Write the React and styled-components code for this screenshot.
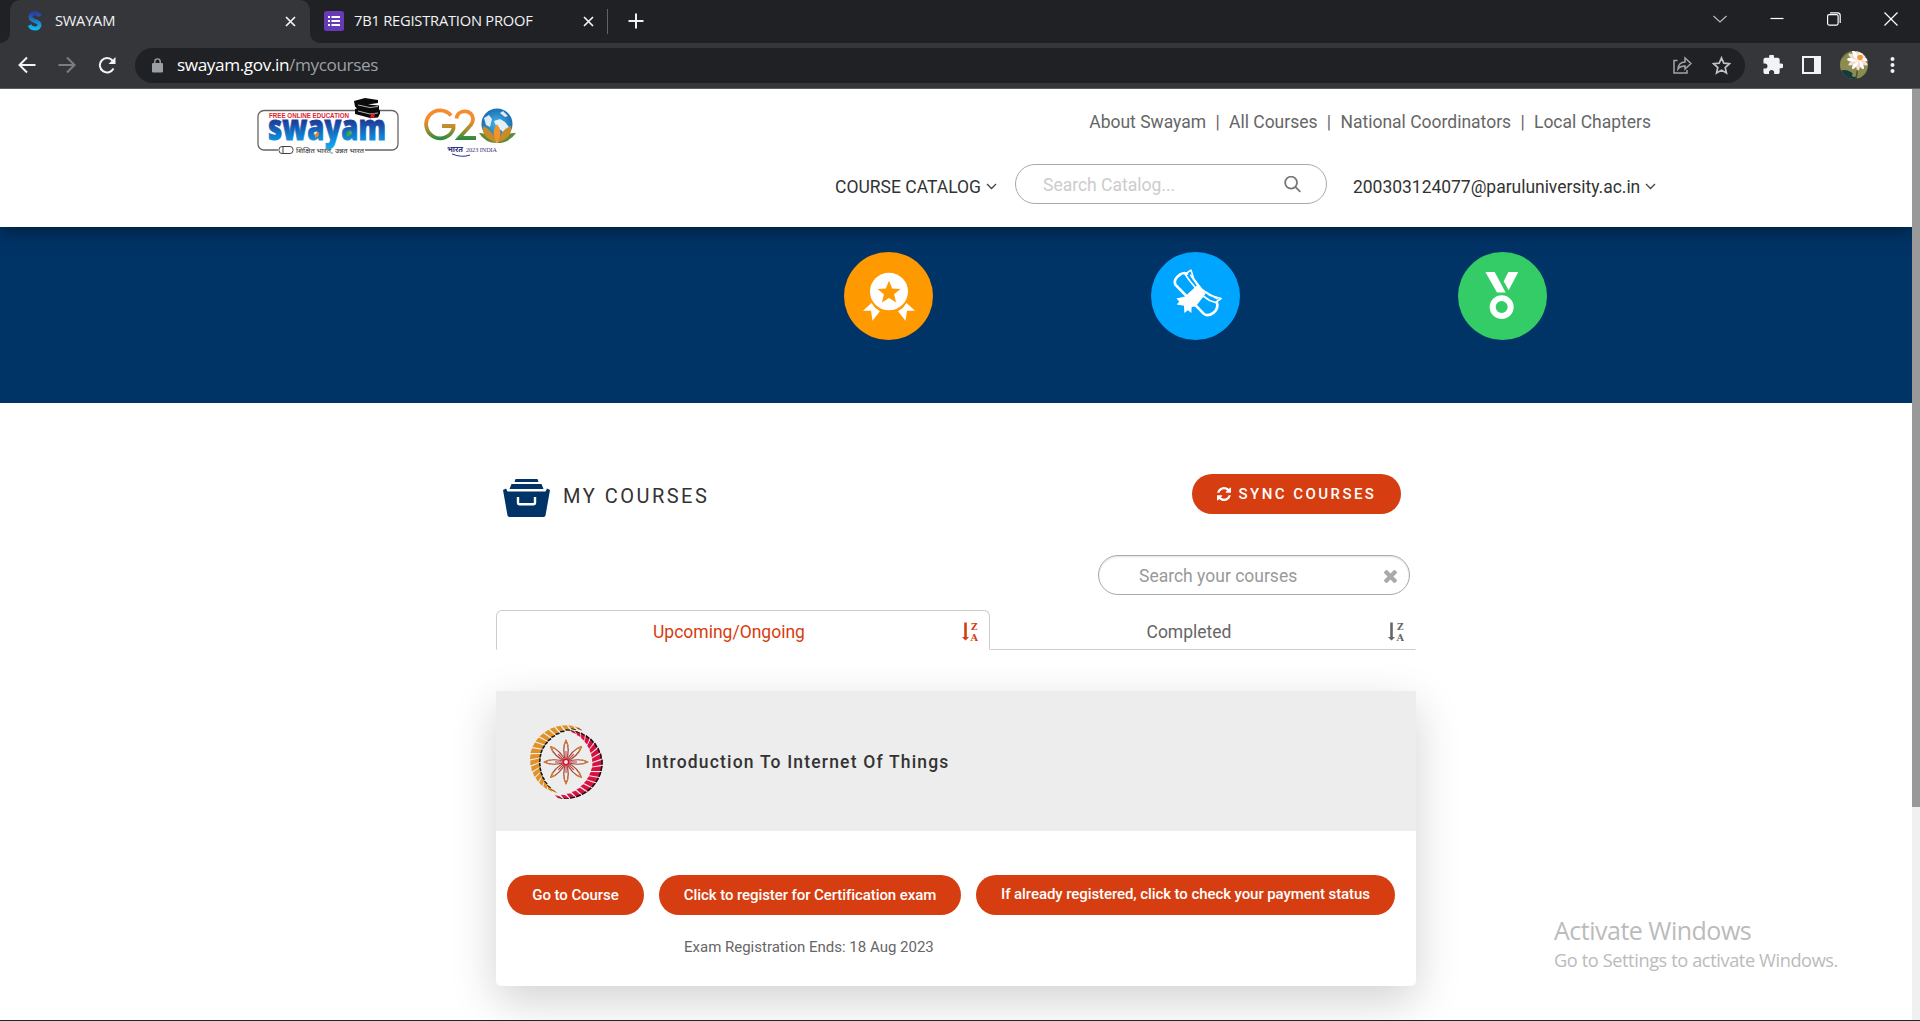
import React from "react";
import styled, { createGlobalStyle } from "styled-components";

const Global = createGlobalStyle`
  *, *::before, *::after { box-sizing: border-box; }
  body { margin: 0; background: #fff; overflow: hidden; font-family: Roboto, "Liberation Sans", sans-serif; }
  svg { display: block; flex: none; }
`;

const ui = `"Open Sans", "Noto Sans", sans-serif`;

const Window = styled.div`
  width: 1920px; height: 1021px; display: flex; flex-direction: column;
  border-bottom: 1px solid #1a2927; overflow: hidden; position: relative;
`;
const Label = styled.span`
  display: block; white-space: nowrap; flex: none;
  font-family: ${p => (p.$ui ? ui : 'Roboto, "Liberation Sans", sans-serif')};
  font-size: ${p => p.$size || 17.5}px;
  font-weight: ${p => p.$weight || 400};
  color: ${p => p.$color || "#333"};
  letter-spacing: ${p => p.$track || 0}px;
  line-height: ${p => p.$line || 22}px;
  margin-left: ${p => p.$ml || 0}px;
`;

/* browser chrome */
const TabStrip = styled.div`
  height: 43px; flex: none; display: flex; background: #202124; align-items: stretch;
`;
const Flare = styled.div`
  width: 10px; background: #35363a; flex: none;
  &::before {
    content: ""; display: block; height: 43px; background: #202124;
    border-radius: ${p => (p.$right ? "0 0 0 10px" : "0 0 10px 0")};
  }
`;
const Tab = styled.div`
  width: ${p => p.$w}px; flex: none; display: flex; align-items: center; padding: 0 0 1px ${p => p.$pl}px;
  background: ${p => (p.$active ? "#35363a" : "transparent")};
  border-radius: 10px 10px 0 0;
`;
const TabTitle = styled(Label)`padding-bottom: 2px;`;
const Spacer = styled.div`flex: ${p => (p.$w ? `0 0 ${p.$w}px` : 1)};`;
const StripDivider = styled.div`width: 1px; height: 25px; margin: 9px 20px 0 13px; background: #5f6368;`;
const WindowButtons = styled.div`display: flex; align-items: flex-start; gap: 43px; padding: 12px 22px 0 0;`;
const Toolbar = styled.div`
  height: 46px; flex: none; display: flex; align-items: center; background: #35363a;
  border-bottom: 1px solid #5c5d60; padding: 0 25px 1px 18px;
`;
const Nav = styled.div`display: flex; gap: 22px; width: 117px; flex: none;`;
const Omnibox = styled.div`
  width: 1610px; height: 35px; border-radius: 18px; background: #202124; display: flex; align-items: center;
  padding: 0 14px 0 17px; flex: none;
`;
const PageActions = styled.div`display: flex; align-items: center; gap: 20px;`;
const Extensions = styled.div`display: flex; align-items: center; flex: 1; justify-content: space-between; padding-left: 18px;`;
const ExtensionIcons = styled.div`display: flex; align-items: center; gap: 19px;`;

/* page */
const Viewport = styled.div`display: flex; flex: 1; min-height: 0;`;
const Page = styled.div`flex: 1; display: flex; flex-direction: column; overflow: hidden;`;
const Scrollbar = styled.div`width: 8px; background: #f0f0f0;`;
const Thumb = styled.div`height: 718px; background: #999;`;

const Header = styled.header`
  height: 138px; flex: none; display: flex; padding-left: 257px; background: #fff;
  box-shadow: 0 2px 18px rgba(0,0,0,.5); z-index: 1;
`;
const Logos = styled.div`display: flex; align-items: flex-start; gap: 24px; width: 578px; flex: none; padding-top: 8px;`;
const Emblem20 = styled.div`padding-top: 7px;`;
const HeaderRight = styled.div`width: 821px; display: flex; flex-direction: column;`;
const Links = styled.nav`display: flex; justify-content: flex-end; gap: 9.3px; padding: 22px 5px 0 0;`;
const HeaderRow = styled.div`display: flex; align-items: center; height: 40px; margin-top: 31px;`;
const MenuItem = styled.div`display: flex; align-items: center; gap: 5px; width: ${p => p.$w}px; flex: none; padding-top: 5px;`;
const SearchBox = styled.div`
  width: 312px; height: 40px; border: 1px solid #aaa; border-radius: 20px; display: flex; align-items: center;
  justify-content: space-between; flex: none; background: #fff;
  padding: ${p => p.$pad};
  box-shadow: ${p => (p.$inset ? "inset 0 1px 2px rgba(0,0,0,.12)" : "none")};
`;
const Banner = styled.section`
  height: 176px; flex: none; background: #003366; display: flex; gap: 218px; padding: 25px 0 0 844px;
`;
const Main = styled.main`width: 920px; margin-left: 496px; display: flex; flex-direction: column;`;
const TitleRow = styled.div`
  height: 111px; flex: none; display: flex; align-items: flex-start; justify-content: space-between; padding: 71px 15px 0 7px;
`;
const Title = styled.h1`display: flex; gap: 13px; margin: 0; padding-top: 5px;`;
const Button = styled.button`
  height: 40px; width: ${p => p.$w}px; flex: none; border: 0; border-radius: 20px; background: #d63d10; padding: 0 0 ${p => p.$pb || 0}px;
  display: flex; align-items: center; justify-content: center; gap: ${p => p.$gap || 0}px;
`;
const SearchRow = styled.div`display: flex; justify-content: flex-end; padding: 41px 6px 0 0;`;
const Tabs = styled.div`display: flex; height: 40px; margin-top: 15px;`;
const CourseTab = styled.div`
  width: ${p => p.$w}px; display: flex; align-items: center; padding: ${p => p.$pad};
  justify-content: space-between;
  border: 1px solid transparent;
  ${p => p.$active
    ? "border-color: #ccc; border-bottom-color: transparent; border-radius: 6px 6px 0 0;"
    : "border-bottom-color: #ccc;"}
`;
const Card = styled.article`
  margin-top: 41px; height: 295px; border-radius: 0 0 5px 5px; background: #fff;
  box-shadow: 0 15px 45px rgba(0,0,0,.18);
`;
const CardHead = styled.div`height: 140px; background: #ededed; display: flex; align-items: center; padding: 2px 0 0 33px; gap: 42px;`;
const Actions = styled.div`display: flex; gap: 15px; padding: 44px 0 0 11px;`;
const Note = styled.div`padding: 21px 0 0 188px;`;
const Watermark = styled.aside`position: absolute; left: 1554px; top: 913px;`;

const Svg = ({ w, h, box, children, ...r }) => (
  <svg width={w} height={h} viewBox={box || `0 0 ${w} ${h}`} fill="none" {...r}>{children}</svg>
);
const Cross = () => (
  <Svg w={11} h={11} stroke="#f1f3f4" strokeWidth="1.7"><path d="M1 1l9 9M10 1l-9 9" /></Svg>
);
const Chevron = () => (
  <Svg w={11} h={7} stroke="#444" strokeWidth="1.3"><path d="M1 1l4.500 4.500L10 1" /></Svg>
);
const Sort = ({ color }) => (
  <Svg w={16} h={20} fill={color}>
    <path d="M2.200 .5h2.600v14.500h2.200L3.500 18.500 0 15h2.200z" />
    <text x="9" y="8.200" fontFamily="DejaVu Serif" fontWeight="700" fontSize="9.500" textLength="6.500" lengthAdjust="spacingAndGlyphs">Z</text>
    <text x="8.400" y="18.700" fontFamily="DejaVu Serif" fontWeight="700" fontSize="9.500" textLength="7.600" lengthAdjust="spacingAndGlyphs">A</text>
  </Svg>
);

const SwayamLogo = () => (
  <Svg w={143} h={62}>
    <defs>
      <linearGradient id="sw" x1="0" y1="0" x2="0" y2="1">
        <stop offset=".4" stopColor="#1d3f9c" /><stop offset=".7" stopColor="#0f80d0" /><stop offset="1" stopColor="#16b4f0" />
      </linearGradient>
    </defs>
    <path d="M98 13.500H7a6 6 0 0 0-6 6V47a6 6 0 0 0 6 6h14M108 53h27a6 6 0 0 0 6-6V19.500a6 6 0 0 0-6-6h-17" stroke="#666" strokeWidth="1.300" />
    <rect x="22" y="49.500" width="14" height="7" rx="3" stroke="#444" />
    <path d="M26 49.500v7" stroke="#444" />
    <text x="12" y="20.500" fontFamily="Liberation Sans" fontWeight="700" fontSize="6.300" fill="#e3202b" textLength="80" lengthAdjust="spacingAndGlyphs">FREE ONLINE EDUCATION</text>
    <text x="11" y="43" fontFamily="Open Sans" fontWeight="800" fontSize="36" fill="url(#sw)" stroke="url(#sw)" strokeWidth=".9" textLength="118" lengthAdjust="spacingAndGlyphs">swayam</text>
    <path d="M58 41q-1-5 3.500-6q2 4-3.500 6z" fill="#f58220" /><path d="M90 40q-2-5 3-7q3 5-3 7z" fill="#3aaa35" />
    <text x="39" y="56" fontFamily="Noto Sans Devanagari, Noto Sans" fontWeight="500" fontSize="6.500" fill="#444" textLength="68" lengthAdjust="spacingAndGlyphs">शिक्षित भारत, उन्नत भारत</text>
    <path d="M97 4l11-3 13 2v3l-10 1.500 11 1v4l1 1v3l-2 4-8 .500-15-4v-5l2-.5-2-2z" fill="#0a0a0a" />
    <path d="M101 8l12 2.500 8-1M101 14l12 3 8-1" stroke="#ddd" strokeWidth=".8" />
    <path d="M114 17l4-1-1 5-2-1-2 2z" fill="#e3202b" />
  </Svg>
);

const G20Logo = () => (
  <Svg w={93} h={54} box="0 -2 93 54">
    <defs>
      <linearGradient id="g2" x1="0" y1="4" x2="0" y2="35" gradientUnits="userSpaceOnUse">
        <stop offset=".3" stopColor="#f68b2c" /><stop offset=".62" stopColor="#a98f2e" /><stop offset="1" stopColor="#138a43" />
      </linearGradient>
      <radialGradient id="gl"><stop stopColor="#47b5e8" /><stop offset="1" stopColor="#1a6fb4" /></radialGradient>
    </defs>
    <path d="M27 9.500A14 14 0 1 0 29.500 22.500V20H18M32.500 12.500c1-10 17-9.500 16.500 1c-.3 5-3 6-14 18.500H52" stroke="url(#g2)" strokeWidth="3.800" />
    <circle cx="73" cy="18" r="15.500" fill="url(#gl)" />
    <path d="M60 12l5-3 3 4-2 8-4-2zM70 15l6-2 5 3 4 5-5 6-3-3-4-2zM79 5l5 5-3 1-5-4z" fill="#fff" opacity=".85" />
    <path d="M55 27q8-1 18 10q10-11 19-10q-7 10-19 10t-18-10z" fill="#5d8a34" />
    <path d="M59 20q9 3 14 17q5-14 14-17q2 12-14 17q-16-5-14-17z" fill="#c98b28" />
    <path d="M73 18q-7 8 0 19q7-11 0-19z" fill="#f0952a" />
    <text x="23" y="46" fontFamily="Noto Sans Devanagari, Noto Sans" fontWeight="700" fontSize="7.500" fill="#2d2f84" textLength="16" lengthAdjust="spacingAndGlyphs">भारत</text>
    <text x="42" y="45.500" fontFamily="Liberation Serif" fontSize="6.500" fill="#2d2f84" textLength="31" lengthAdjust="spacingAndGlyphs">2023 INDIA</text>
    <path d="M28 48q10 4 18 1" stroke="#2d2f84" />
  </Svg>
);

const polar = (r, a) => `${(37 + r * Math.cos(a)).toFixed(2)} ${(37 + r * Math.sin(a)).toFixed(2)}`;
const Crescent = ({ from, to, count, color, edge }) => {
  const out = [];
  const step = (to - from) / count;
  const dir = Math.sign(step);
  for (let i = 0; i < count; i++) {
    const t = (i + 0.5) / count;
    const th = 0.8 + 9.4 * Math.pow(Math.sin(Math.PI * t), 0.9);
    const ro = edge === "outer" ? 31.5 + 5.2 * Math.min(1, t * 2.2) : 36.7 - 4.5 * Math.max(0, t * 2 - 1);
    const a = from + i * step;
    const b = a + step * 0.8;
    const k = 0.05 * (edge === "outer" ? -1 : 1) * dir;
    const ri = ro - th;
    out.push(<path key={i} fill={color} d={`M${polar(ro, a + k)}L${polar(ro, b + k)}L${polar(ri, b - k)}L${polar(ri, a - k)}Z`} />);
    const e1 = edge === "outer" ? ro + 0.2 : ri + 1;
    const e2 = e1 - Math.min(1.5, th * 0.25);
    const s = edge === "outer" ? k : -k;
    out.push(<path key={`e${i}`} fill="#111" d={`M${polar(e1, a + s)}L${polar(e1, b + s)}L${polar(e2, b + s)}L${polar(e2, a + s)}Z`} />);
  }
  return <g>{out}</g>;
};
const deg = Math.PI / 180;
const Emblem = () => (
  <Svg w={74} h={74}>
    <Crescent from={-66 * deg} to={-254 * deg} count={19} color="#e09226" edge="inner" />
    <Crescent from={-80 * deg} to={108 * deg} count={19} color="#d8103f" edge="outer" />
    {[0, 45, 90, 135, 180, 225, 270, 315].map(a => (
      <g key={a} transform={`rotate(${a} 37 37)`}>
        <path d="M37 37q-4.500-13 0-21.500q4.500 8.500 0 21.500z" stroke="#a5452e" strokeWidth="1.200" />
        <path d="M35 21q.5-3.500 2-5.500q1.500 2 2 5.500" stroke="#d08030" strokeWidth="1.200" />
        <path d="M37 36V26" stroke="#c9304a" strokeWidth="1" />
      </g>
    ))}
    <circle cx="37" cy="37" r="2.600" fill="#ededed" stroke="#d8103f" strokeWidth="1.400" />
  </Svg>
);

const refresh = "M1511 928q0 5-1 7-64 268-268 434.500t-478 166.500q-146 0-282.500-55t-243.500-157l-129 129q-19 19-45 19t-45-19-19-45v-448q0-26 19-45t45-19h448q26 0 45 19t19 45-19 45l-137 137q71 66 161 102t187 36q134 0 250-65t186-179q11-17 53-117 8-23 30-23h192q13 0 22.500 9.500t9.500 22.500zm25-800v448q0 26-19 45t-45 19h-448q-26 0-45-19t-19-45 19-45l138-138q-148-137-349-137-134 0-250 65t-186 179q-11 17-53 117-8 23-30 23h-199q-13 0-22.500-9.500t-9.500-22.500v-7q65-268 270-434.500t480-166.500q146 0 284 55.500t245 156.500l130-129q19-19 45-19t45 19 19 45z";
const times = "M1490 1322q0 40-28 68l-136 136q-28 28-68 28t-68-28l-294-294-294 294q-28 28-68 28t-68-28l-136-136q-28-28-28-68t28-68l294-294-294-294q-28-28-28-68t28-68l136-136q28-28 68-28t68 28l294 294 294-294q28-28 68-28t68 28l136 136q28 28 28 68t-28 68l-294 294 294 294q28 28 28 68z";

const links = ["About Swayam", "All Courses", "National Coordinators", "Local Chapters"];
const petals = [0, 30, 60, 90, 120, 150, 180, 210, 240, 270, 300, 330];

export default function App() {
  return (
    <Window>
      <Global />
      <TabStrip>
        <Flare />
        <Tab $active $w={300} $pl={18}>
          <Svg w={14} h={20}>
            <defs><linearGradient id="s" x1="0" y1="0" x2="0" y2="1"><stop stopColor="#2b3f9e" /><stop offset="1" stopColor="#10b6ee" /></linearGradient></defs>
            <path d="M12 5C10 1 2.500 1.500 2.500 6c0 5 9 3 9 8c0 4.500-8 4.500-10 0" stroke="url(#s)" strokeWidth="4" />
          </Svg>
          <TabTitle $ui $size={14.7} $track={-0.25} $color="#f1f3f4" $ml={13}>SWAYAM</TabTitle>
          <Spacer /><Cross /><Spacer $w={14} />
        </Tab>
        <Flare $right />
        <Tab $w={274} $pl={4}>
          <Svg w={20} h={20}>
            <rect width="20" height="20" rx="2.500" fill="#673ab7" />
            <path d="M7.500 6h8.500M7.500 10h8.500M7.500 14h8.500M4 6h2M4 10h2M4 14h2" stroke="#fff" strokeWidth="2" />
          </Svg>
          <TabTitle $ui $size={14.7} $track={-0.22} $color="#f1f3f4" $ml={10}>7B1 REGISTRATION PROOF</TabTitle>
          <Spacer /><Cross />
        </Tab>
        <StripDivider />
        <Svg w={16} h={43} stroke="#f1f3f4" strokeWidth="2"><path d="M8 13.500v15M.5 21h15" /></Svg>
        <Spacer />
        <WindowButtons>
          <Svg w={14} h={14} stroke="#bbb" strokeWidth="1.200"><path d="M.5 4l6.500 6 6.500-6" /></Svg>
          <Svg w={14} h={14} stroke="#fff" strokeWidth="1.200"><path d="M.5 6.500h13" /></Svg>
          <Svg w={14} h={14} stroke="#fff" strokeWidth="1.200"><rect x=".6" y="2.600" width="10.500" height="10.500" rx="1.500" /><path d="M3 .8h7.500a2.700 2.700 0 0 1 2.700 2.700V11" /></Svg>
          <Svg w={14} h={14} stroke="#fff" strokeWidth="1.200"><path d="M.5.5l13 13M13.500.5l-13 13" /></Svg>
        </WindowButtons>
      </TabStrip>
      <Toolbar>
        <Nav>
          <Svg w={18} h={18} stroke="#f1f3f4" strokeWidth="2"><path d="M17.500 9H2M9 1.500L1.500 9 9 16.500" /></Svg>
          <Svg w={18} h={18} stroke="#7c7d80" strokeWidth="2"><path d="M.5 9H16M9 1.500L16.500 9 9 16.500" /></Svg>
          <Svg w={18} h={18} stroke="#f1f3f4" strokeWidth="2"><path d="M15.500 12.500A7.200 7.200 0 1 1 14.500 4.500" /><path d="M17.500 1v7h-7z" fill="#f1f3f4" stroke="none" /></Svg>
        </Nav>
        <Omnibox>
          <Svg w={11} h={15} fill="#9aa0a6"><rect y="5" width="11" height="9.500" rx="1.200" /><path d="M2.800 6V3.600a2.700 2.700 0 0 1 5.400 0V6" fill="none" stroke="#9aa0a6" strokeWidth="1.400" /></Svg>
          <Label $ui $size={17.2} $track={-0.4} $color="#fff" $line={24} $ml={14}>swayam.gov.in</Label>
          <Label $ui $size={17.2} $track={-0.42} $color="#9aa0a6" $line={24}>/mycourses</Label>
          <Spacer />
          <PageActions>
            <Svg w={19} h={18} stroke="#a3a4a7" strokeWidth="1.500"><path d="M4.500 4.500H1V17h13v-3M5 13c.5-5 3-7 7-7V2L18 7.500l-6 5.500V10c-3.500 0-5.500 1-7 3z" /></Svg>
            <Svg w={19} h={19} box="0 0 18 18" stroke="#bfc0c2" strokeWidth="1.600"><path d="M9 1.800l2.200 5 5.300.5-4 3.600 1.200 5.300L9 13.400l-4.700 2.800 1.200-5.300-4-3.600 5.300-.5z" /></Svg>
          </PageActions>
        </Omnibox>
        <Extensions>
          <ExtensionIcons>
            <Svg w={20} h={20} box="1.500 2 21 21" fill="#f1f3f4"><path d="M20.500 11H19V7c0-1.100-.9-2-2-2h-4V3.500a2.500 2.500 0 0 0-5 0V5H4c-1.100 0-2 .9-2 2v3.800h1.500a2.700 2.700 0 0 1 0 5.400H2V20c0 1.100.9 2 2 2h3.800v-1.500a2.700 2.700 0 0 1 5.400 0V22H17c1.100 0 2-.9 2-2v-4h1.500a2.500 2.500 0 0 0 0-5z" /></Svg>
            <Svg w={19} h={18}><rect x="1" y="1" width="17" height="16" stroke="#f1f3f4" strokeWidth="2" /><path d="M12 1h6v16h-6z" fill="#f1f3f4" /></Svg>
            <Svg w={28} h={28}>
              <clipPath id="av"><circle cx="14" cy="14" r="14" /></clipPath>
              <g clipPath="url(#av)">
                <rect width="28" height="28" fill="#8c8c50" /><path d="M0 20q9-4 18 8H0z" fill="#153a40" /><path d="M18 16l-2 12" stroke="#4a5428" strokeWidth="1.500" />
                <path d="M10 0L0 9" stroke="#666c3a" />
                <circle cx="14" cy="24" r="2" fill="#8c8c50" />
                {petals.map(a => <ellipse key={a} cx="18" cy="3" rx="2" ry="5.500" fill={a % 60 ? "#fff" : "#f5dcd2"} transform={`rotate(${a} 18 8.500)`} />)}
                <circle cx="20" cy="6.500" r="2.800" fill="#f09a35" />
              </g>
            </Svg>
          </ExtensionIcons>
          <Svg w={5} h={18} fill="#f1f3f4"><circle cx="2.500" cy="3" r="2" /><circle cx="2.500" cy="9" r="2" /><circle cx="2.500" cy="15" r="2" /></Svg>
        </Extensions>
      </Toolbar>
      <Viewport>
        <Page>
          <Header>
            <Logos><SwayamLogo /><Emblem20><G20Logo /></Emblem20></Logos>
            <HeaderRight>
              <Links>
                {links.map((t, i) => (
                  <React.Fragment key={t}>
                    {i > 0 && <Label $color="#666">|</Label>}
                    <Label $color="#666">{t}</Label>
                  </React.Fragment>
                ))}
              </Links>
              <HeaderRow>
                <MenuItem $w={180}><Label>COURSE CATALOG</Label><Chevron /></MenuItem>
                <SearchBox $pad="1px 25px 0 27px">
                  <Label $color="#ccc">Search Catalog...</Label>
                  <Svg w={17} h={17} box="0 .5 18 18" stroke="#777" strokeWidth="1.900"><circle cx="7.500" cy="7.500" r="6.300" /><path d="M12 12l5.300 5.300" /></Svg>
                </SearchBox>
                <Spacer $w={26} />
                <MenuItem><Label $track={-0.03}>200303124077@paruluniversity.ac.in</Label><Chevron /></MenuItem>
              </HeaderRow>
            </HeaderRight>
          </Header>
          <Banner>
            <Svg w={89} h={88} box="844 251.500 89 89" preserveAspectRatio="none">
              <circle cx="888.500" cy="296" r="44.500" fill="#f90" />
              <circle cx="889" cy="291.500" r="19" fill="#fff" />
              <path d="M889 280.500l3.200 7.800 8.300.6-6.400 5.400 2 8.200-7.100-4.400-7.100 4.400 2-8.200-6.400-5.400 8.300-.6z" fill="#f90" />
              <path d="M863 311l8.500-8q3 5.500 8.500 8.500l-7.500 9.500-1.500-10zM915 311l-8.500-8q-3 5.500-8.500 8.500l7.500 9.500 1.500-10z" fill="#fff" />
            </Svg>
            <Svg w={89} h={88} box="18 19 267 267" preserveAspectRatio="none">
              <circle cx="151.500" cy="152.500" r="133.500" fill="#00a5ff" />
              <path d="M128 88Q120 78 106 87Q84 102 91 118L176 206Q188 217 206 203Q222 190 215 170" stroke="#fff" strokeWidth="8" strokeLinejoin="round" />
              <path d="M120 86l18-12 8 26 24 32 24 18 34 10-16 12-18-6-26-18-34-42z" stroke="#fff" strokeWidth="5" strokeLinejoin="round" />
              <path d="M136 88l26 38M182 140l36 22" stroke="#fff" strokeWidth="5" />
              <path d="M158 118l24 28-30 38-12 2-1 18-10-8-11 8-1-22-22-4 8-9-9-9 26-6z" fill="#fff" />
            </Svg>
            <Svg w={89} h={88} box="939 19 267 267" preserveAspectRatio="none">
              <circle cx="1072.500" cy="152.500" r="133.500" fill="#33cc66" />
              <path d="M1021 80h28l33 62h-26zM1090 80h30l-29 55-15-27z" fill="#fff" />
              <circle cx="1070" cy="186" r="27" stroke="#fff" strokeWidth="18" />
            </Svg>
          </Banner>
          <Main>
            <TitleRow>
              <Title>
                <Svg w={47} h={38} fill="#003366">
                  <path d="M12.500 0h22l1 3h-24zM8.500 5h30l2 5h-34z" />
                  <path d="M0 11l3-1.500L4.500 12.500h38L44 9.500 47 11 42.500 36.500a2 2 0 0 1-2 1.500h-34a2 2 0 0 1-2-1.500z" />
                  <path d="M15 18v6q0 1.200 1.200 1.200h14.600q1.200 0 1.200-1.200v-6" fill="none" stroke="#fff" strokeWidth="2.400" />
                </Svg>
                <Label $size={20} $track={2.5} $line={34}>MY COURSES</Label>
              </Title>
              <Button $w={209} $gap={8}>
                <Svg w={14} h={14} box="0 0 1536 1536" fill="#fff"><path d={refresh} /></Svg>
                <Label $size={15} $weight={500} $color="#fff" $track={2.45}>SYNC COURSES</Label>
              </Button>
            </TitleRow>
            <SearchRow>
              <SearchBox $inset $pad="2px 12px 0 40px">
                <Label $color="#999">Search your courses</Label>
                <Svg w={13} h={13} box="302 366 1188 1188" fill="#aaa"><path d={times} /></Svg>
              </SearchBox>
            </SearchRow>
            <Tabs>
              <CourseTab $active $w={494} $pad="4px 11px 0 156px"><Label $color="#d63d10">Upcoming/Ongoing</Label><Sort color="#d63d10" /></CourseTab>
              <CourseTab $w={426} $pad="4px 11px 0 155.5px"><Label $color="#666">Completed</Label><Sort color="#666" /></CourseTab>
            </Tabs>
            <Card>
              <CardHead>
                <Emblem />
                <Label $weight={500} $track={1.18} $ml={0.5}>Introduction To Internet Of Things</Label>
              </CardHead>
              <Actions>
                <Button $w={137}><Label $size={15} $weight={500} $track={-0.08} $color="#fff">Go to Course</Label></Button>
                <Button $w={302}><Label $size={15} $weight={500} $track={-0.08} $color="#fff">Click to register for Certification exam</Label></Button>
                <Button $w={419} $pb={2}><Label $size={15} $weight={500} $track={-0.08} $color="#fff">If already registered, click to check your payment status</Label></Button>
              </Actions>
              <Note><Label $size={15} $color="#666">Exam Registration Ends: 18 Aug 2023</Label></Note>
            </Card>
          </Main>
        </Page>
        <Scrollbar><Thumb /></Scrollbar>
      </Viewport>
      <Watermark>
        <Label $ui $size={25} $line={34} $track={-0.5} $color="#bbb">Activate Windows</Label>
        <Label $ui $size={18.2} $line={26} $track={-0.4} $color="#bbb">Go to Settings to activate Windows.</Label>
      </Watermark>
    </Window>
  );
}
